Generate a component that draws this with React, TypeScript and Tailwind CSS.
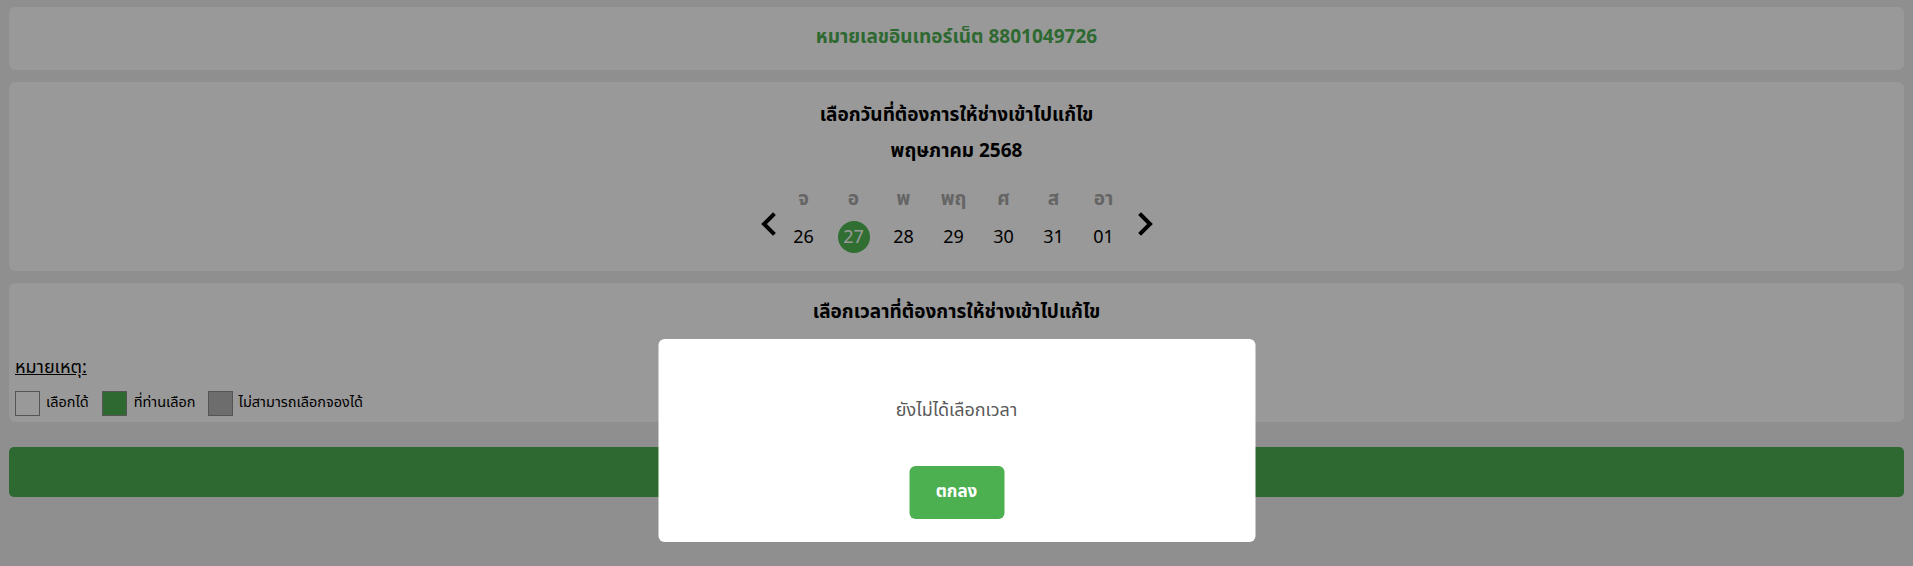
import React from "react";

const days = ["จ", "อ", "พ", "พฤ", "ศ", "ส", "อา"];
const dates = ["26", "27", "28", "29", "30", "31", "01"];

function Chevron({ dir }: { dir: "left" | "right" }) {
  return (
    <svg width="17" height="24" viewBox="0 0 17 24" className="shrink-0">
      {dir === "left" ? (
        <polyline points="13,3 4,12 13,21" fill="none" stroke="#000" strokeWidth="4" strokeLinecap="square" strokeLinejoin="miter" />
      ) : (
        <polyline points="4,3 13,12 4,21" fill="none" stroke="#000" strokeWidth="4" strokeLinecap="square" strokeLinejoin="miter" />
      )}
    </svg>
  );
}

export default function App() {
  return (
    <div
      className="relative min-h-[566px] w-full bg-[#eeeeee] px-[9px] pt-[7px]"
      style={{ fontFamily: '"Noto Sans Thai", "Noto Sans", "Liberation Sans", sans-serif' }}
    >
      {/* Card 1 */}
      <div className="flex h-[63px] items-center justify-center rounded-[6px] bg-white">
        <div className="text-[19px] font-bold text-[#4caf50]">หมายเลขอินเทอร์เน็ต 8801049726</div>
      </div>

      {/* Card 2 */}
      <div className="mt-[12px] flex flex-col items-center rounded-[6px] bg-white pt-[15px] pb-[15px]">
        <div className="h-[37px] text-[19px] font-bold leading-[37px] text-black">เลือกวันที่ต้องการให้ช่างเข้าไปแก้ไข</div>
        <div className="h-[36px] text-[19px] font-bold leading-[36px] text-black">พฤษภาคม 2568</div>
        <div className="mt-[12px] flex items-center">
          <div className="mt-[10px] mr-[2px]">
            <Chevron dir="left" />
          </div>
          <div className="grid grid-cols-7">
            {days.map((d) => (
              <div key={d} className="flex h-[36px] w-[50px] items-center justify-center text-[19px] font-bold text-[#a8a8a8]">
                {d}
              </div>
            ))}
            {dates.map((d) => (
              <div key={d} className="flex h-[38px] w-[50px] items-center justify-center">
                {d === "27" ? (
                  <div className="flex h-[32px] w-[32px] items-center justify-center rounded-full bg-[#52b854] text-[18px] text-white">
                    {d}
                  </div>
                ) : (
                  <span className="text-[18px] text-black">{d}</span>
                )}
              </div>
            ))}
          </div>
          <div className="mt-[10px] ml-[8px]">
            <Chevron dir="right" />
          </div>
        </div>
      </div>

      {/* Card 3 */}
      <div className="mt-[12px] flex flex-col rounded-[6px] bg-white px-[6px] pt-[12px] pb-[6px]">
        <div className="h-[36px] text-center text-[19px] font-bold leading-[36px] text-black">
          เลือกเวลาที่ต้องการให้ช่างเข้าไปแก้ไข
        </div>
        <div className="h-[25px]" />
        <div className="h-[24px] text-[18px] leading-[24px] text-black">
          <span className="underline">หมายเหตุ:</span>
        </div>
        <div className="mt-[11px] flex h-[25px] items-center text-[14.5px] text-black">
          <div className="h-[25px] w-[25px] border border-[#8e8e8e] bg-white" />
          <span className="ml-[6px]">เลือกได้</span>
          <div className="ml-[13px] h-[25px] w-[25px] border border-[#8e8e8e] bg-[#4caf50]" />
          <span className="ml-[7px]">ที่ท่านเลือก</span>
          <div className="ml-[12px] h-[25px] w-[25px] border border-[#8e8e8e] bg-[#b6b6b6]" />
          <span className="ml-[6px]">ไม่สามารถเลือกจองได้</span>
        </div>
      </div>

      {/* Submit bar */}
      <div className="mt-[25px] h-[50px] rounded-[5px] bg-[#4caf50]" />

      {/* Overlay */}
      <div className="fixed inset-0 bg-black/40" />

      {/* Modal */}
      <div className="absolute left-1/2 top-[339px] flex h-[203px] w-[597px] -translate-x-1/2 flex-col items-center rounded-[6px] bg-white">
        <div className="mt-[58px] h-[28px] text-[18px] leading-[28px] text-[#595959]">ยังไม่ได้เลือกเวลา</div>
        <button className="mt-[41px] flex h-[53px] w-[95px] items-center justify-center rounded-[6px] bg-[#4caf50] text-[17px] font-bold text-white">
          ตกลง
        </button>
      </div>
    </div>
  );
}
